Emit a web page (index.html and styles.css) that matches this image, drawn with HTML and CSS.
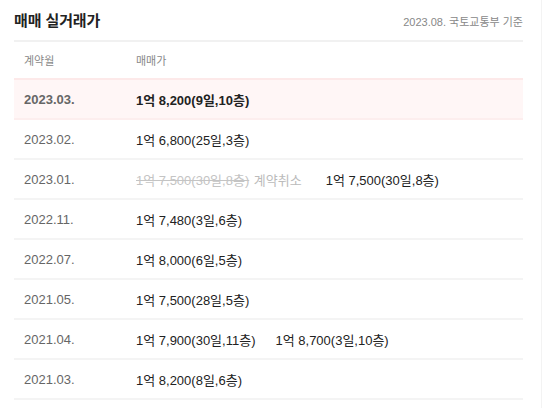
FILE: index.html
```html
<!DOCTYPE html>
<html lang="ko">
<head>
<meta charset="utf-8">
<link rel="stylesheet" href="styles.css">
</head>
<body>
<div class="page">
  <div class="head">
    <h2 class="title">매매 실거래가</h2>
    <span class="source">2023.08. 국토교통부 기준</span>
  </div>
  <div class="table">
    <div class="row row-head">
      <span class="c-date">계약월</span>
      <span class="c-price">매매가</span>
    </div>
    <div class="row row-hl">
      <span class="c-date">2023.03.</span>
      <span class="c-price"><span class="deal bold">1억 8,200(9일,10층)</span></span>
    </div>
    <div class="row">
      <span class="c-date">2023.02.</span>
      <span class="c-price"><span class="deal">1억 6,800(25일,3층)</span></span>
    </div>
    <div class="row">
      <span class="c-date">2023.01.</span>
      <span class="c-price"><span class="deal cancel"><s>1억 7,500(30일,8층)</s> <span class="cancel-label">계약취소</span></span><span class="deal">1억 7,500(30일,8층)</span></span>
    </div>
    <div class="row">
      <span class="c-date">2022.11.</span>
      <span class="c-price"><span class="deal">1억 7,480(3일,6층)</span></span>
    </div>
    <div class="row">
      <span class="c-date">2022.07.</span>
      <span class="c-price"><span class="deal">1억 8,000(6일,5층)</span></span>
    </div>
    <div class="row">
      <span class="c-date">2021.05.</span>
      <span class="c-price"><span class="deal">1억 7,500(28일,5층)</span></span>
    </div>
    <div class="row">
      <span class="c-date">2021.04.</span>
      <span class="c-price"><span class="deal">1억 7,900(30일,11층)</span><span class="deal">1억 8,700(3일,10층)</span></span>
    </div>
    <div class="row">
      <span class="c-date">2021.03.</span>
      <span class="c-price"><span class="deal">1억 8,200(8일,6층)</span></span>
    </div>
  </div>
</div>
</body>
</html>
```

FILE: styles.css
```css
html, body {
  margin: 0;
  padding: 0;
  background: #fff;
}
body {
  font-family: "Liberation Sans", "Noto Sans CJK KR", Arial, sans-serif;
  color: #222;
}
.page {
  width: 542px;
  height: 408px;
  padding: 0 18px 0 14px;
  box-sizing: border-box;
  border-right: 1px solid #f3f3f3;
}
.head {
  height: 40px;
  display: flex;
  align-items: center;
  justify-content: space-between;
  border-bottom: 2px solid #f1f1f1;
}
.title {
  margin: 0;
  font-size: 15px;
  font-weight: bold;
  color: #222;
  letter-spacing: -0.1px;
  position: relative;
  top: -1px;
}
.source {
  font-size: 11px;
  color: #888;
  position: relative;
  top: 1px;
}
.row {
  display: flex;
  align-items: center;
  height: 38px;
  border-bottom: 2px solid #f4f4f4;
  font-size: 13px;
}
.row-head {
  height: 36px;
  border-bottom: none;
  font-size: 11px;
  color: #888;
}
.row-head .c-date, .row-head .c-price {
  color: #888;
}
.row-hl {
  background: #fff6f6;
  border-top: 2px solid #fde9e9;
  border-bottom: 2px solid #fdeeee;
}
.c-date {
  width: 112px;
  padding-left: 10px;
  color: #666;
  flex: none;
}
.c-price {
  display: flex;
  gap: 20px;
  color: #222;
}
.row-hl .c-date {
  font-weight: bold;
}
.bold {
  font-weight: bold;
}
.cancel {
  color: #bbb;
}
.cancel s {
  color: #c4c4c4;
}
.cancel-label {
  margin-left: 1px;
  margin-right: 4px;
}
```
